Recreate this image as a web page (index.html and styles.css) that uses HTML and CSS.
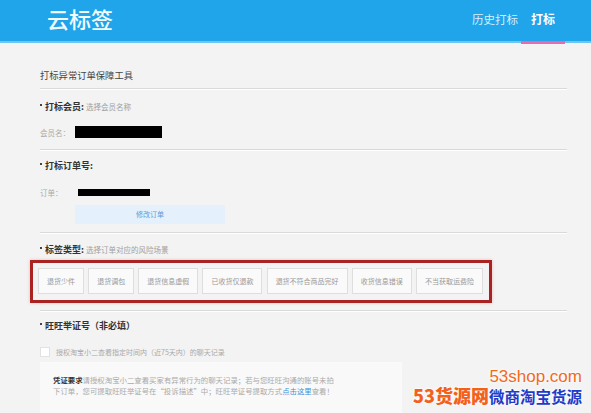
FILE: index.html
```html
<!DOCTYPE html>
<html lang="zh">
<head>
    <meta charset="UTF-8">
    <meta name="viewport" content="width=device-width, initial-scale=1.0">
    <title>云标签</title>
    <link rel="stylesheet" href="styles.css">
</head>
<body>
    <header class="topbar">
        <div class="logo">云标签</div>
        <nav class="nav">
            <a class="nav-item">历史打标</a>
            <a class="nav-item active">打标</a>
        </nav>
    </header>

    <main class="page">
        <div class="block page-title">打标异常订单保障工具</div>

        <section class="block block-member">
            <div class="label-row"><span class="dot"></span><b>打标会员:</b> <span class="hint">选择会员名称</span></div>
            <div class="field-row"><span class="field-name">会员名：</span><span class="redact redact-member"></span></div>
        </section>

        <section class="block block-order">
            <div class="label-row"><span class="dot"></span><b>打标订单号:</b></div>
            <div class="field-row"><span class="field-name">订单：</span><span class="redact redact-order"></span></div>
            <div class="btn-edit">修改订单</div>
        </section>

        <section class="block block-tags">
            <div class="label-row"><span class="dot"></span><b>标签类型:</b> <span class="hint">选择订单对应的风险场景</span></div>
            <div class="tag-box">
                <span class="tag">退货少件</span>
                <span class="tag">退货调包</span>
                <span class="tag">退货信息虚假</span>
                <span class="tag">已收货仅退款</span>
                <span class="tag">退货不符合商品完好</span>
                <span class="tag">收货信息错误</span>
                <span class="tag">不当获取运费险</span>
            </div>
        </section>

        <section class="block-proof">
            <div class="label-row"><span class="dot"></span><b>旺旺举证号（非必填）</b></div>
            <label class="check-row"><span class="checkbox"></span>授权淘宝小二查看指定时间内（近75天内）的聊天记录</label>
            <div class="note">
                <p><b>凭证要求</b>请授权淘宝小二查看买家有异常行为的聊天记录；若与您旺旺沟通的账号未拍</p>
                <p>下订单，您可提取旺旺举证号在“投诉描述”中；旺旺举证号提取方式<a class="link">点击这里</a>查看！</p>
            </div>
        </section>
    </main>

    <div class="watermark">
        <div class="wm-site">53shop.com</div>
        <div class="wm-name"><span class="wm-orange">53货源网</span><span class="wm-blue">微商淘宝货源</span></div>
    </div>
</body>
</html>
```

FILE: styles.css
```css
body {
    margin: 0;
    background-color: #f3f3f3;
    font-family: "Noto Sans CJK SC", "Liberation Sans", sans-serif;
    color: #333;
    height: 413px;
    overflow: hidden;
    position: relative;
}
.topbar {
    height: 41px;
    background-color: #20a4ea;
    border-bottom: 2px solid #6cc6ef;
    display: flex;
    align-items: center;
}
.logo {
    margin-left: 47px;
    font-size: 22px;
    font-weight: 500;
    color: #f2fbff;
    line-height: 1;
    margin-top: -6px;
}
.nav {
    margin-left: auto;
    margin-right: 26px;
    display: flex;
    height: 100%;
}
.nav-item {
    display: flex;
    align-items: center;
    font-size: 11.5px;
    color: #d8effc;
    padding: 0 0 4px;
}
.nav-item.active {
    position: relative;
    font-weight: bold;
    font-size: 12px;
    color: #fff;
    padding: 0 10px 4px;
    margin-left: 3px;
}
.nav-item.active::after {
    content: "";
    position: absolute;
    left: 0;
    right: 0;
    bottom: -3px;
    height: 3px;
    background-color: #e66bb0;
}

.page {
    width: 527px;
    margin-left: 40px;
}
.block {
    border-bottom: 1px solid #d9d9d9;
    box-shadow: 0 1px 0 #fff;
}
.page-title {
    padding: 22px 0 3px;
    line-height: 20px;
    font-size: 9.3px;
    color: #444;
}
.label-row {
    line-height: 16px;
    font-size: 9px;
    color: #333;
    display: flex;
    align-items: center;
}
.dot {
    width: 2px;
    height: 2px;
    background-color: #444;
    margin-right: 3px;
    margin-top: -4px;
}
.hint {
    font-size: 7.5px;
    color: #a0a0a0;
    margin-left: 2px;
}
.field-row {
    display: flex;
    align-items: center;
    height: 14px;
    font-size: 7.5px;
    color: #aaa;
}
.field-name {
    width: 35px;
}
.redact {
    background-color: #000;
}
.redact-member {
    width: 87px;
    height: 12px;
}
.redact-order {
    width: 72px;
    height: 7px;
    margin-left: 3px;
}

.block-member {
    padding: 10px 0 10px;
}
.block-member .field-row {
    margin-top: 10px;
}
.block-order {
    padding: 8px 0 8px;
}
.block-order .field-row {
    margin-top: 11px;
}
.btn-edit {
    margin: 6px 0 0 35px;
    width: 150px;
    height: 19px;
    line-height: 19px;
    text-align: center;
    font-size: 7px;
    color: #5b9bd6;
    background-color: #e4f0fb;
}

.block-tags {
    padding: 9px 0 7px;
}
.tag-box {
    margin: 2px 0 0 -10px;
    width: 462px;
    box-sizing: border-box;
    border: 3px solid #a92323;
    padding: 5px 6px 6px 5px;
    display: flex;
    justify-content: space-between;
    box-shadow: 0 0 3px rgba(220, 80, 80, 0.35);
}
.tag {
    height: 26px;
    box-sizing: border-box;
    line-height: 24px;
    padding: 0 8px;
    border: 1px solid #dedede;
    background-color: #fafafa;
    font-size: 7px;
    color: #999;
}

.block-proof {
    padding-top: 7px;
}
.check-row {
    display: flex;
    align-items: center;
    margin-top: 11px;
    height: 14px;
    font-size: 7px;
    color: #aaa;
}
.checkbox {
    width: 8px;
    height: 8px;
    border: 1px solid #e2e2e2;
    background-color: #fff;
    margin-right: 6px;
}
.note {
    margin-top: 3px;
    width: 362px;
    height: 60px;
    box-sizing: border-box;
    padding: 12px 0 0 13px;
    background-color: #f9f9f9;
    font-size: 7.4px;
    line-height: 11px;
    color: #aaa;
}
.note p {
    margin: 0;
    white-space: nowrap;
}
.note b {
    color: #333;
}
.link {
    color: #3f8fd8;
}

.watermark {
    position: absolute;
    right: 9px;
    bottom: 9px;
    text-align: right;
    text-shadow: 0 0 3px #fff, 0 0 3px #fff;
}
.wm-site {
    font-family: "Liberation Sans", sans-serif;
    font-size: 17px;
    line-height: 17px;
    margin-bottom: 1px;
    color: #f06a1c;
}
.wm-name {
    line-height: 18px;
    height: 18px;
    white-space: nowrap;
}
.wm-orange {
    font-size: 18px;
    font-weight: 900;
    color: #f2601a;
}
.wm-blue {
    font-size: 15.5px;
    font-weight: bold;
    color: #1e3cc8;
}
```
